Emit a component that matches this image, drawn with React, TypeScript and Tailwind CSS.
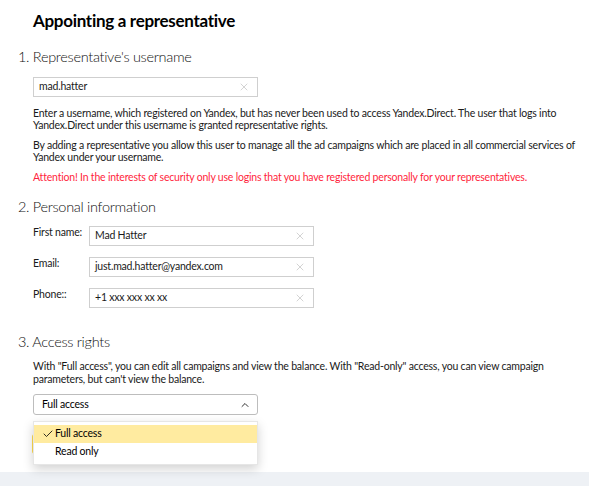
import { X, ChevronUp, Check } from 'lucide-react';

function TextInput({ value, width }: { value: string; width: string }) {
  return (
    <div className={`flex h-[20px] items-center border border-[#cfcfcf] bg-white pl-[5px] pr-[7px] ${width}`}>
      <span className="flex-1 text-[10.5px] tracking-[-0.2px] text-[#1a1a1a]">{value}</span>
      <X className="h-[12px] w-[12px] text-[#b5b5b5]" strokeWidth={1.2} />
    </div>
  );
}

function FieldRow({ label, value }: { label: string; value: string }) {
  return (
    <div className="flex items-start">
      <div className="w-[56px] whitespace-nowrap text-[10.5px] leading-[12px] tracking-[-0.2px] text-[#1a1a1a]">{label}</div>
      <TextInput value={value} width="w-[225px]" />
    </div>
  );
}

export default function App() {
  return (
    <div
      className="flex min-h-[486px] w-[589px] flex-col bg-white text-black"
      style={{ fontFamily: 'Lato, "Noto Sans", sans-serif' }}
    >
      <div className="flex-1 pl-[18px]">
        <h1 className="ml-[15px] mt-[9px] text-[17px] font-bold leading-[24px] tracking-[-0.3px]">Appointing a representative</h1>

        <h2 className="mt-[15px] text-[14.5px] font-light leading-[18px] tracking-[-0.3px] text-[#111]">1. Representative's username</h2>
        <div className="ml-[15px] mt-[11px]">
          <TextInput value="mad.hatter" width="w-[225px]" />
          <div className="mt-[10px] w-[545px] space-y-[8px] text-[10.5px] leading-[12px] tracking-[-0.2px] text-[#1a1a1a]">
            <p>
              Enter a username, which registered on Yandex, but has never been used to access Yandex.Direct. The user that logs into Yandex.Direct under this username is granted representative rights.
            </p>
            <p>
              By adding a representative you allow this user to manage all the ad campaigns which are placed in all commercial services of Yandex under your username.
            </p>
            <p className="text-[#ff1f3d]">
              Attention! In the interests of security only use logins that you have registered personally for your representatives.
            </p>
          </div>
        </div>

        <h2 className="mt-[15px] text-[14.5px] font-light leading-[18px] tracking-[-0.3px] text-[#111]">2. Personal information</h2>
        <div className="ml-[15px] mt-[10px] flex flex-col gap-[11px]">
          <FieldRow label="First name:" value="Mad Hatter" />
          <FieldRow label="Email:" value="just.mad.hatter@yandex.com" />
          <FieldRow label="Phone::" value="+1 xxx xxx xx xx" />
        </div>

        <h2 className="mt-[25px] text-[14.5px] font-light leading-[18px] tracking-[-0.3px] text-[#111]">3. Access rights</h2>
        <div className="ml-[15px] mt-[9px]">
          <p className="w-[545px] text-[10.5px] leading-[13px] tracking-[-0.2px] text-[#1a1a1a]">
            With "Full access", you can edit all campaigns and view the balance. With "Read-only" access, you can view campaign parameters, but can't view the balance.
          </p>
          <div className="relative mt-[8px] w-[225px]">
            <div className="flex h-[21px] items-center rounded-[3px] border border-[#bdbdbd] bg-white pl-[8px] pr-[6px]">
              <span className="flex-1 text-[10.5px] tracking-[-0.2px]">Full access</span>
              <ChevronUp className="h-[12px] w-[12px] text-[#333]" strokeWidth={2} />
            </div>
            <div className="ml-[-1px] mt-[19px] h-[20px] w-[60px] rounded-[3px] bg-[#ffdb4d]" />
            <div className="absolute left-0 top-[27px] w-[225px] border border-[#e6e6e6] bg-white py-[3px] shadow-[0_4px_10px_rgba(0,0,0,0.18)]">
              <div className="flex h-[18px] items-center bg-[#ffeba0] pl-[8px] text-[10.5px] tracking-[-0.2px]">
                <Check className="mr-[1px] h-[12px] w-[12px]" strokeWidth={1.6} />
                Full access
              </div>
              <div className="flex h-[18px] items-center pl-[21px] text-[10.5px] tracking-[-0.2px]">Read only</div>
            </div>
          </div>
        </div>
      </div>
      <div className="h-[14px] bg-[#eef1f5]" />
    </div>
  );
}
